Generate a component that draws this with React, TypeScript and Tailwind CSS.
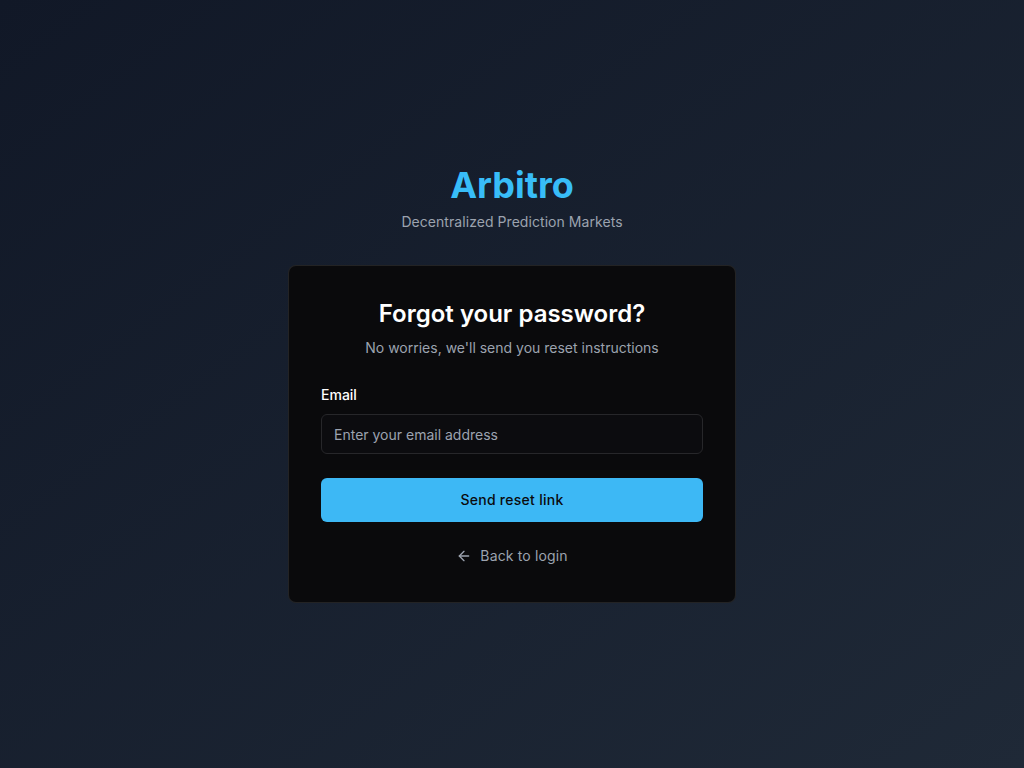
import { ArrowLeft } from "lucide-react";

export default function App() {
  return (
    <div
      className="min-h-screen flex items-center justify-center px-6 bg-gradient-to-br from-[#111827] to-[#1f2937]"
      style={{ fontFamily: "Inter, 'Noto Sans', sans-serif" }}
    >
      <div className="w-full max-w-md">
        <div className="mb-[33px] text-center">
          <h1 className="text-4xl font-bold text-[#38bdf8]">Arbitro</h1>
          <p className="mt-[7px] text-sm tracking-[0.004em] text-[#9ca3af]">
            Decentralized Prediction Markets
          </p>
        </div>

        <div className="rounded-lg border border-white/10 bg-[#0a0a0c] px-8 pt-8 pb-9">
          <div className="text-center">
            <h2 className="text-2xl font-semibold text-white">
              Forgot your password?
            </h2>
            <p className="mt-2 text-sm text-[#9ca3af]">
              No worries, we'll send you reset instructions
            </p>
          </div>

          <form className="mt-[27px]" onSubmit={(e) => e.preventDefault()}>
            <label className="block text-sm font-medium text-white mb-[9px]">
              Email
            </label>
            <input
              type="email"
              placeholder="Enter your email address"
              className="block w-full h-10 rounded-md border border-[#27272a] bg-[#0c0c0f] px-3 text-sm text-white placeholder:text-[#9ca3af] outline-none"
            />
            <button
              type="submit"
              className="mt-6 w-full h-11 rounded-md bg-[#3db8f5] text-sm font-medium tracking-[0.02em] text-[#0b0b0d]"
            >
              Send reset link
            </button>
          </form>

          <div className="mt-6 flex justify-center">
            <a
              href="#"
              className="flex items-center gap-2 text-sm tracking-[0.01em] text-[#9ca3af] hover:text-gray-300"
            >
              <ArrowLeft size={16} />
              Back to login
            </a>
          </div>
        </div>
      </div>
    </div>
  );
}
